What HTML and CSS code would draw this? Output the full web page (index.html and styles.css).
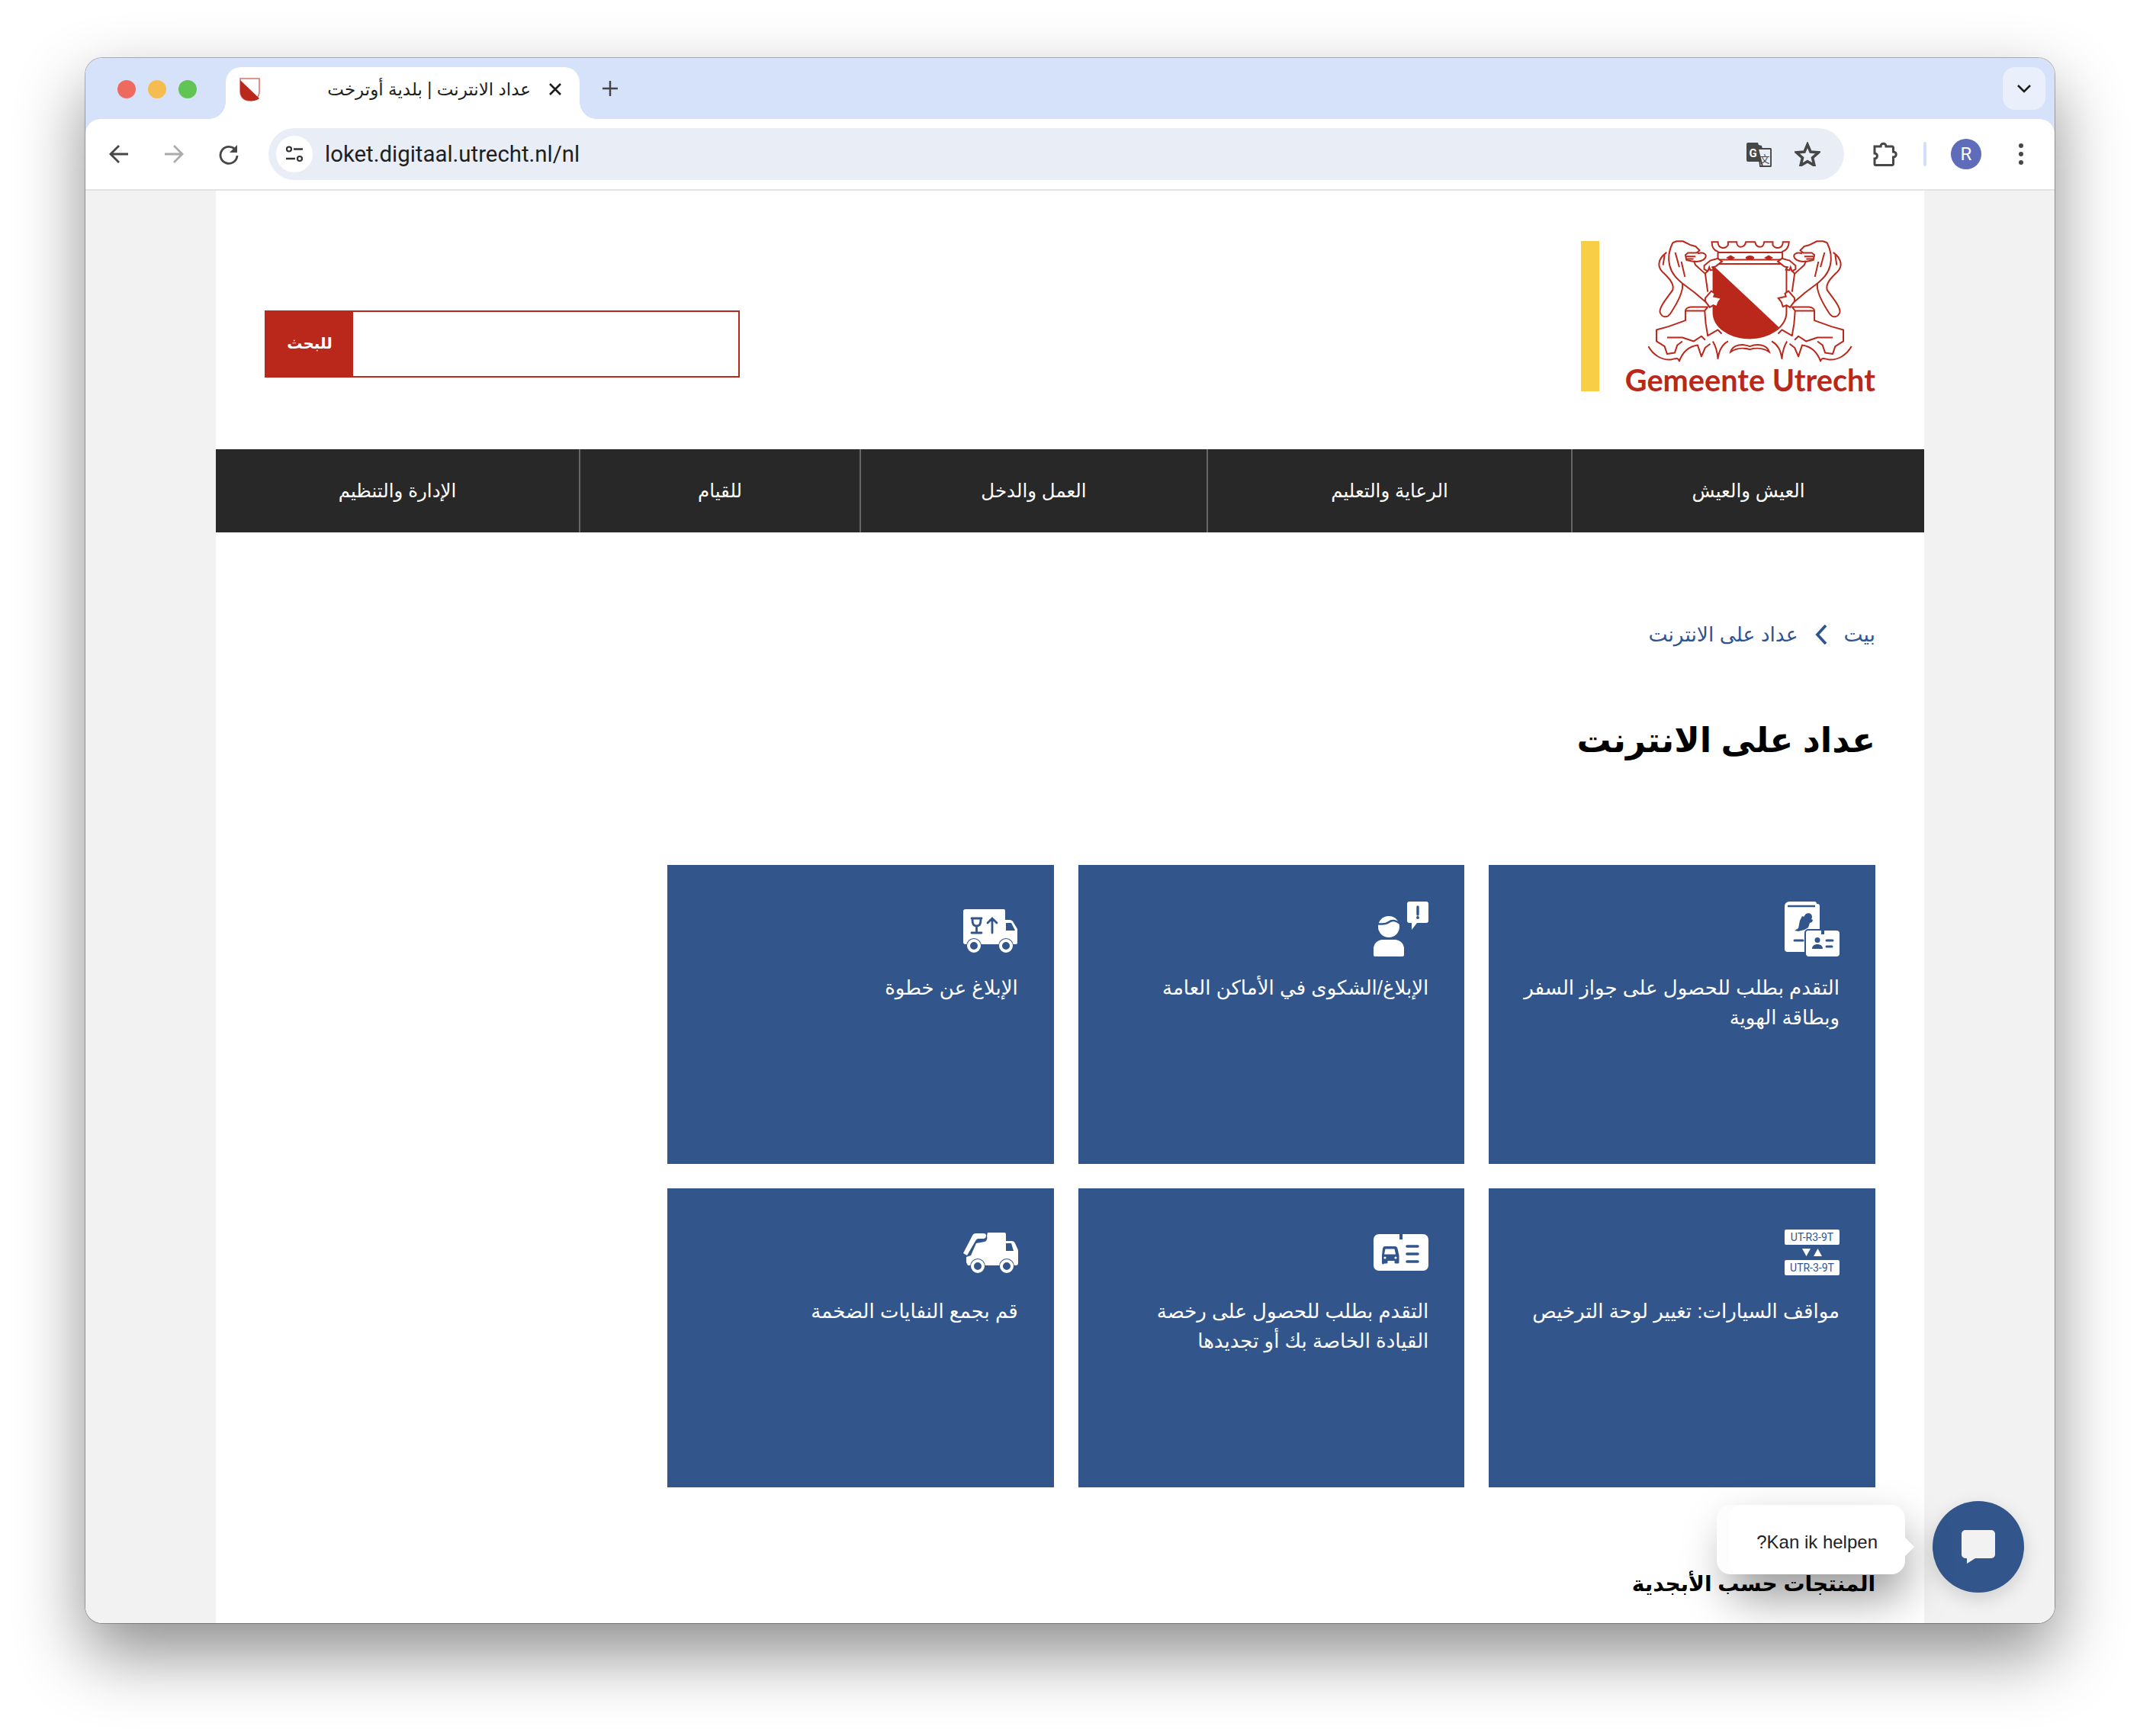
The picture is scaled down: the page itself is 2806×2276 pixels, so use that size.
FILE: index.html
```html
<!DOCTYPE html>
<html lang="ar">
<head>
    <meta charset="UTF-8">
    <meta name="viewport" content="width=device-width, initial-scale=1.0">
    <title>عداد الانترنت | بلدية أوترخت</title>
    <link rel="stylesheet" href="styles.css">
</head>
<body>
    <div class="window">
        <div class="tabstrip">
            <div class="lights">
                <span class="light red"></span>
                <span class="light yellow"></span>
                <span class="light green"></span>
            </div>
            <div class="tab">
                <svg class="favicon" viewBox="0 0 27 31">
                    <path d="M1 1h25v17c0 7-5 12-12.500 12S1 25 1 18z" fill="#fff" stroke="#d9726a" stroke-width="1.500"/>
                    <path d="M1 3l25 24c-2 2-7 4-12.500 3C6 30 1 25 1 18z" fill="#b9281a"/>
                </svg>
                <span class="tab-title" dir="rtl">عداد الانترنت | بلدية أوترخت</span>
                <svg class="tab-close" viewBox="0 0 20 20"><path d="M3 3l14 14M17 3L3 17" stroke="#1f1f1f" stroke-width="2.600" fill="none"/></svg>
            </div>
            <svg class="new-tab" viewBox="0 0 24 24"><path d="M12 2v20M2 12h20" stroke="#444" stroke-width="2.500" fill="none"/></svg>
            <div class="tab-search">
                <svg viewBox="0 0 20 12" width="20" height="12"><path d="M2 2l8 8 8-8" stroke="#1f1f1f" stroke-width="2.600" fill="none"/></svg>
            </div>
        </div>

        <div class="toolbar">
            <button class="tool">
                <svg viewBox="0 0 28 28" width="28" height="28"><path d="M26 14H4M14 3L3 14l11 11" stroke="#474747" stroke-width="2.800" fill="none"/></svg>
            </button>
            <button class="tool">
                <svg viewBox="0 0 28 28" width="28" height="28"><path d="M2 14h22M14 3l11 11-11 11" stroke="#ababab" stroke-width="2.800" fill="none"/></svg>
            </button>
            <button class="tool">
                <svg viewBox="0 0 28 28" width="28" height="28"><path d="M23 9a11 11 0 1 0 2 7" stroke="#474747" stroke-width="2.800" fill="none"/><path d="M25 2v10H15z" fill="#474747"/></svg>
            </button>
            <div class="omnibox">
                <div class="site-info">
                    <svg viewBox="0 0 24 24" width="24" height="24">
                        <circle cx="5" cy="5.500" r="3" stroke="#333" stroke-width="2.200" fill="none"/>
                        <path d="M11 5.500h12M1 18h12" stroke="#333" stroke-width="2.400"/>
                        <circle cx="19" cy="18" r="3" stroke="#333" stroke-width="2.200" fill="none"/>
                    </svg>
                </div>
                <span class="url">loket.digitaal.utrecht.nl/nl</span>
                <button class="omni-icon">
                    <svg viewBox="0 0 33 33" width="33" height="33">
                        <path d="M15 9h16a1 1 0 0 1 1 1v21a1 1 0 0 1-1 1H18z" fill="#e9edf6" stroke="#474747" stroke-width="1.800"/>
                        <path d="M2 1h13l1 3 4 1 7 27-10-6H2a2 2 0 0 1-2-2V3a2 2 0 0 1 2-2z" fill="#474747"/>
                        <path d="M15 9h16a1 1 0 0 1 1 1v21a1 1 0 0 1-1 1H21l-4-15z" fill="#e9edf6" stroke="#474747" stroke-width="1.800"/>
                        <text x="8.500" y="20" class="glyph-g">G</text>
                        <text x="24" y="27" class="glyph-zh">文</text>
                    </svg>
                </button>
                <button class="omni-icon">
                    <svg viewBox="0 0 34 32" width="34" height="32"><path d="M17 3.500l4 9.500 10.500.900-8 6.900 2.500 10.200-9-5.400-9 5.400 2.500-10.200-8-6.900 10.500-.900z" fill="none" stroke="#474747" stroke-width="3.600"/></svg>
                </button>
            </div>
            <button class="tool">
                <svg viewBox="0 0 32 32" width="32" height="32"><path d="M2 6h8c0-5 7-5 7 0h8a1.500 1.500 0 0 1 1.500 1.500V13c5 0 5 7 0 7v9a1.500 1.500 0 0 1-1.500 1.500H3.500A1.500 1.500 0 0 1 2 29v-7c4.500 0 4.500-7 0-7z" fill="none" stroke="#474747" stroke-width="3"/></svg>
            </button>
            <span class="tool-sep"></span>
            <button class="tool"><span class="avatar">R</span></button>
            <button class="tool">
                <svg viewBox="0 0 8 30" width="8" height="30"><circle cx="4" cy="4" r="3" fill="#474747"/><circle cx="4" cy="15" r="3" fill="#474747"/><circle cx="4" cy="26" r="3" fill="#474747"/></svg>
            </button>
        </div>

        <div class="viewport">
            <div class="page" dir="rtl">
                <header class="site-header">
                    <div class="logo" dir="ltr">
                        <span class="logo-bar"></span>
                        <div class="logo-mark">
                            <svg class="crest" viewBox="365 70 805 485">
                                <defs>
                                    <g id="lion" fill="none" stroke="#b9281a" stroke-width="6" stroke-linejoin="round">
                                        <path d="M462 82l16-6h24l28 14 22 6 16 16-12 10h-34l-10 8 4 20 30 6 6 14 38 34 36-44 24-14"/>
                                        <path d="M560 124c25-6 38 4 30 18-8 12-30 16-45 13M512 136h40M514 146h30"/>
                                        <path d="M462 82c-14 28-20 58-12 90 8 33 30 53 50 70l48 36 52 44"/>
                                        <path d="M500 242c5 28-20 78-48 120-12 16-32 16-40-6-4-21 28-56 50-88 8-28-22-53-42-73-15-17-22-45 18-75"/>
                                        <path d="M472 120l16 58M496 156l14 60M430 130l-6 40M590 204l10 71"/>
                                        <path d="M512 350c0-8 10-14 22-15h66l-12 15h-76v38l-67 24-47 13v45l32 20 10 30 30-5 10-30 20-15"/>
                                        <path d="M588 350l4 50 8 48 40-23 15 15M440 455h60l45 15 30-20 15 15"/>
                                        <path d="M366 490c19 35 54 55 89 52 15-2 27-12 33 6 12-33 37-58 72-63l15 45 15-35 20-15"/>
                                        <path d="M620 470c12 20 18 45 20 68 5-33 15-53 40-68"/>
                                    </g>
                                </defs>
                                <use href="#lion"/>
                                <use href="#lion" transform="matrix(-1 0 0 1 1532 0)"/>
                                <path d="M622 165h288v190c0 60-70 103-145 103-80 0-143-45-143-103z" fill="#fff" stroke="#b9281a" stroke-width="6"/>
                                <path d="M622 172l258 243c-24 26-70 43-115 43-80 0-143-45-143-103z" fill="#b9281a"/>
                                <path d="M616 79h24c0 26 28 30 40 12V79h34c0 26 30 26 36 0h36c6 26 34 26 36 0h34v12c12 18 40 14 40-12h24c0 20-12 34-26 38v32H640v-32c-14-4-24-18-24-38zM640 120h252" fill="#fff" stroke="#b9281a" stroke-width="6"/>
                                <path d="M672 141l18-10 18 10-18 10zM748 141c6-12 30-12 36 0-6 12-30 12-36 0zM822 141l18-10 18 10-18 10z" fill="#b9281a"/>
                                <path d="M586 172l24-20 30-8 16 12-26 20-12 2 6 10-14 2-4-12-6 16-14-8z" fill="#fff" stroke="#b9281a" stroke-width="6"/>
                                <path d="M946 172l-24-20-30-8-16 12 26 20 12 2-6 10 14 2 4-12 6 16 14-8z" fill="#fff" stroke="#b9281a" stroke-width="6"/>
                                <path d="M590 300l24-28 14 10-4 12 30 6-12 16-6 18-14-6-14 8-18-24z" fill="#fff" stroke="#b9281a" stroke-width="6"/>
                                <path d="M942 300l-24-28-14 10 4 12-30 6 12 16 6 18 14-6 14 8 18-24z" fill="#fff" stroke="#b9281a" stroke-width="6"/>
                                <path d="M690 512c10-32 50-32 76-22 26-10 66-10 76 22-22-15-52-17-76-10-24-7-54-5-76 10z" fill="none" stroke="#b9281a" stroke-width="6"/>
                            </svg>
                            <span class="logo-text">Gemeente Utrecht</span>
                        </div>
                    </div>
                    <form class="search">
                        <input class="search-input" type="text">
                        <button class="search-btn" type="button">للبحث</button>
                    </form>
                </header>

                <nav class="main-nav">
                    <a>العيش والعيش</a>
                    <a>الرعاية والتعليم</a>
                    <a>العمل والدخل</a>
                    <a>للقيام</a>
                    <a>الإدارة والتنظيم</a>
                </nav>

                <main class="content">
                    <div class="breadcrumb">
                        <a>بيت</a>
                        <svg viewBox="0 0 16 28" width="16" height="28"><path d="M14 2L3 14l11 12" stroke="#2f5590" stroke-width="3.800" fill="none"/></svg>
                        <a>عداد على الانترنت</a>
                    </div>

                    <h1>عداد على الانترنت</h1>

                    <div class="cards">
                        <a class="card">
                            <svg class="card-icon" viewBox="0 0 72 72">
                                <path d="M6 0h33c2 0 3 1 3 3h1a3 3 0 0 1 3 3v60H4a4 4 0 0 1-4-4V6a6 6 0 0 1 6-6z" fill="#fff"/>
                                <path d="M4 6h36" stroke="#32568c" stroke-width="2.400"/>
                                <path d="M28 16c4-2 8 0 8 4 0 2-1 3-1 3l2 1-1 3-3 1-2 6-5 3-8 2-5-1 5-3 2-10 3-6 2 1z" fill="#32568c"/>
                                <path d="M13 51h11" stroke="#32568c" stroke-width="3" stroke-linecap="round"/>
                                <rect x="26" y="36" width="46" height="36" rx="5" fill="#32568c"/>
                                <path d="M31 38h17v5h4v-5h16a4 4 0 0 1 4 4v26a4 4 0 0 1-4 4H32a4 4 0 0 1-4-4V41a3 3 0 0 1 3-3z" fill="#fff"/>
                                <circle cx="43" cy="50.500" r="3.500" fill="#32568c"/>
                                <path d="M36 62c0-4 3-6 7-6s7 2 7 6z" fill="#32568c"/>
                                <path d="M55 51h8M55 59h7" stroke="#32568c" stroke-width="3" stroke-linecap="round"/>
                            </svg>
                            <span>التقدم بطلب للحصول على جواز السفر وبطاقة الهوية</span>
                        </a>
                        <a class="card">
                            <svg class="card-icon" viewBox="0 0 72 72">
                                <path d="M47 0h22a3 3 0 0 1 3 3v22a3 3 0 0 1-3 3H57l-7 9v-9h-3a3 3 0 0 1-3-3V3a3 3 0 0 1 3-3z" fill="#fff"/>
                                <path d="M58 7v10" stroke="#32568c" stroke-width="3.400" stroke-linecap="round"/>
                                <circle cx="58" cy="21" r="2" fill="#32568c"/>
                                <circle cx="20" cy="33" r="14" fill="#fff"/>
                                <path d="M5 29c6 1 11 1 15-2 4-3 8-3 15 2" fill="none" stroke="#32568c" stroke-width="2.600"/>
                                <path d="M12 50h16a12 12 0 0 1 12 12v8a2 2 0 0 1-2 2H2a2 2 0 0 1-2-2v-8a12 12 0 0 1 12-12z" fill="#fff"/>
                            </svg>
                            <span>الإبلاغ/الشكوى في الأماكن العامة</span>
                        </a>
                        <a class="card">
                            <svg class="card-icon" viewBox="0 0 72 72">
                                <path d="M3 10h50a2 2 0 0 1 2 2v12h6c2 0 3 1 4 2l6 10v18a2 2 0 0 1-2 2H3a3 3 0 0 1-3-3V13a3 3 0 0 1 3-3z" fill="#fff"/>
                                <path d="M56 28h7l5 10H56z" fill="#32568c"/>
                                <circle cx="14" cy="58" r="10" fill="#32568c"/>
                                <circle cx="14" cy="58" r="7" fill="none" stroke="#fff" stroke-width="4"/>
                                <circle cx="56" cy="58" r="10" fill="#32568c"/>
                                <circle cx="56" cy="58" r="7" fill="none" stroke="#fff" stroke-width="4"/>
                                <path d="M11 22h13M12 22c0 7 1 10 5.500 10S23 29 23 22M17.500 32v8M11 41h13M38 41V22M32 28l6-6 6 6" fill="none" stroke="#32568c" stroke-width="2.800" stroke-linecap="round"/>
                            </svg>
                            <span>الإبلاغ عن خطوة</span>
                        </a>
                        <a class="card">
                            <svg class="card-icon" viewBox="0 0 72 72">
                                <rect x="0" y="6" width="72" height="20" rx="2" fill="#fff"/>
                                <text x="36" y="21" class="plate-text">UT-R3-9T</text>
                                <path d="M23 31h11l-5.500 10zM38 41h11l-5.500-10z" fill="#fff"/>
                                <rect x="0" y="46" width="72" height="20" rx="2" fill="#fff"/>
                                <text x="36" y="61" class="plate-text">UTR-3-9T</text>
                            </svg>
                            <span>مواقف السيارات: تغيير لوحة الترخيص</span>
                        </a>
                        <a class="card">
                            <svg class="card-icon" viewBox="0 0 72 72">
                                <path d="M7 12h27v7h4v-7h27a7 7 0 0 1 7 7v34a7 7 0 0 1-7 7H7a7 7 0 0 1-7-7V19a7 7 0 0 1 7-7z" fill="#fff"/>
                                <path d="M15 28h13c2 0 3 1 3.500 3l2 9v9a1.500 1.500 0 0 1-1.500 1.500h-3a1.500 1.500 0 0 1-1.500-1.500v-2h-9v2a1.500 1.500 0 0 1-1.500 1.500h-3A1.500 1.500 0 0 1 11 49v-9l1-9c.5-2 1.500-3 3-3z" fill="#32568c"/>
                                <path d="M15.500 31.500h12l1.500 7H14z" fill="#fff"/>
                                <circle cx="15" cy="43" r="1.600" fill="#fff"/>
                                <circle cx="29" cy="43" r="1.600" fill="#fff"/>
                                <path d="M44 28h14M44 38h14M44 48h14" stroke="#32568c" stroke-width="3.600" stroke-linecap="round"/>
                            </svg>
                            <span>التقدم بطلب للحصول على رخصة القيادة الخاصة بك أو تجديدها</span>
                        </a>
                        <a class="card">
                            <svg class="card-icon" viewBox="0 0 72 72">
                                <path d="M32 10h22a2 2 0 0 1 2 2v9h7c3 0 4 1 5 3l4 9v17a3 3 0 0 1-3 3H6l-2-4v-7l6-2 7-16 11-2c3-1 4-4 3-8z" fill="#fff"/>
                                <path d="M56 24h7l3 10H56z" fill="#32568c"/>
                                <path d="M0 37l12-23c1-2 2-3 5-3h9c3 0 4 1 4 3s-1 4-4 4h-6c-2 0-3 1-4 3L5 40z" fill="#fff"/>
                                <circle cx="19" cy="54" r="10" fill="#32568c"/>
                                <circle cx="19" cy="54" r="7" fill="none" stroke="#fff" stroke-width="4"/>
                                <circle cx="57" cy="54" r="10" fill="#32568c"/>
                                <circle cx="57" cy="54" r="7" fill="none" stroke="#fff" stroke-width="4"/>
                            </svg>
                            <span>قم بجمع النفايات الضخمة</span>
                        </a>
                    </div>

                    <h2>المنتجات حسب الأبجدية</h2>
                </main>
            </div>
        </div>

        <div class="chat">
            <div class="chat-bubble" dir="rtl">Kan ik helpen?</div>
            <button class="chat-btn">
                <svg viewBox="0 0 44 44" width="44" height="44"><path d="M5 0h34a5 5 0 0 1 5 5v27a5 5 0 0 1-5 5H18l-11 7v-7H5a5 5 0 0 1-5-5V5a5 5 0 0 1 5-5z" fill="#f2f2f2"/></svg>
            </button>
        </div>
    </div>
</body>
</html>
```

FILE: styles.css
```css
* {
    box-sizing: border-box;
}
html, body {
    margin: 0;
    padding: 0;
    background: #fff;
    height: 2276px;
    overflow: hidden;
}
body {
    font-family: "Liberation Sans", "DejaVu Sans", sans-serif;
    padding: 76px 112px 0;
}
button {
    border: none;
    background: none;
    padding: 0;
    font: inherit;
}

/* browser frame */
.window {
    position: relative;
    height: 2052px;
    display: flex;
    flex-direction: column;
    border-radius: 22px;
    overflow: hidden;
    background: #d6e2fa;
}
body::before {
    content: "";
    position: absolute;
    left: 112px;
    top: 76px;
    width: 2582px;
    height: 2052px;
    border-radius: 22px;
    box-shadow: 0 0 0 1px rgba(0, 0, 0, 0.28), 0 40px 90px rgba(0, 0, 0, 0.45);
}
.tabstrip {
    height: 80px;
    flex: none;
    display: flex;
    align-items: flex-start;
}
.lights {
    display: flex;
    gap: 16px;
    padding: 29px 38px 0 42px;
}
.light {
    width: 24px;
    height: 24px;
    border-radius: 50%;
}
.red { background: #ee6a5f; }
.yellow { background: #f5bd4f; }
.green { background: #61c454; }
.tab {
    position: relative;
    width: 464px;
    height: 68px;
    margin-top: 12px;
    padding: 0 20px 10px 18px;
    display: flex;
    align-items: center;
    background: #fff;
    border-radius: 20px 20px 0 0;
}
.tab::before, .tab::after {
    content: "";
    position: absolute;
    bottom: 0;
    width: 22px;
    height: 22px;
}
.tab::before {
    left: -22px;
    background: radial-gradient(circle at 0 0, transparent 21.500px, #fff 22px);
}
.tab::after {
    right: -22px;
    background: radial-gradient(circle at 100% 0, transparent 21.500px, #fff 22px);
}
.favicon {
    width: 27px;
    height: 31px;
    flex: none;
}
.tab-title {
    flex: 1;
    margin-right: 22px;
    font-size: 23px;
    color: #1f1f1f;
    white-space: nowrap;
}
.tab-close {
    width: 20px;
    height: 20px;
    margin-right: 2px;
}
.new-tab {
    width: 24px;
    height: 24px;
    margin: 28px 0 0 28px;
}
.tab-search {
    width: 56px;
    height: 56px;
    margin: 12px 12px 0 auto;
    display: flex;
    align-items: center;
    justify-content: center;
    background: #e9f0fc;
    border-radius: 16px;
}

.toolbar {
    height: 94px;
    flex: none;
    display: flex;
    align-items: flex-start;
    padding: 12px 8px 0;
    background: #fff;
    border-radius: 20px 20px 0 0;
    border-bottom: 2px solid #e1e3e6;
}
.tool {
    width: 72px;
    height: 68px;
    flex: none;
    display: flex;
    align-items: center;
    justify-content: center;
}
.omnibox {
    flex: 1;
    height: 68px;
    margin: 0 18px 0 16px;
    padding: 0 16px 0 10px;
    display: flex;
    align-items: center;
    background: #e9edf6;
    border-radius: 34px;
}
.site-info {
    width: 48px;
    height: 48px;
    display: flex;
    align-items: center;
    justify-content: center;
    background: #fff;
    border-radius: 50%;
}
.url {
    flex: 1;
    margin-left: 16px;
    font-family: Roboto, sans-serif;
    font-size: 29.400px;
    color: #1f1f1f;
}
.omni-icon {
    width: 64px;
    height: 48px;
    display: flex;
    align-items: center;
    justify-content: center;
}
.glyph-g {
    font-family: Roboto, sans-serif;
    font-weight: 700;
    font-size: 15px;
    text-anchor: middle;
    fill: #fff;
}
.glyph-zh {
    font-family: "Noto Sans CJK SC", sans-serif;
    font-size: 13px;
    text-anchor: middle;
    fill: #474747;
}
.tool-sep {
    width: 4px;
    height: 32px;
    margin: 18px 16px 0 14px;
    flex: none;
    background: #d3e0fb;
    border-radius: 2px;
}
.avatar {
    width: 40px;
    height: 40px;
    display: flex;
    align-items: center;
    justify-content: center;
    background: #5f6cba;
    border-radius: 50%;
    font-family: Roboto, sans-serif;
    font-size: 24px;
    color: #fff;
}

/* site */
.viewport {
    flex: 1;
    min-height: 0;
    background: #f2f2f2;
    overflow: hidden;
}
.page {
    width: 2240px;
    height: 100%;
    margin: 0 auto;
    background: #fff;
}
.site-header {
    height: 339px;
    padding: 64px 64px 0;
    display: flex;
    justify-content: space-between;
    align-items: flex-start;
}
.logo {
    display: flex;
    gap: 34px;
}
.logo-bar {
    width: 24px;
    height: 197px;
    margin-top: 2px;
    background: #f7ce46;
}
.logo-mark {
    display: flex;
    flex-direction: column;
    align-items: center;
}
.crest {
    width: 268px;
    height: 162px;
    display: block;
}
.logo-text {
    margin-top: -2px;
    font-family: Lato, sans-serif;
    font-weight: 700;
    font-size: 39.700px;
    line-height: 48px;
    color: #b9281a;
    white-space: nowrap;
}
.search {
    width: 623px;
    height: 88px;
    margin-top: 93px;
    display: flex;
    border: 2px solid #b9281a;
}
.search-input {
    flex: 1;
    min-width: 0;
    border: none;
    outline: none;
}
.search-btn {
    width: 114px;
    padding-bottom: 2px;
    background: #b9281a;
    color: #fff;
    font-weight: 700;
    font-size: 20px;
}
.main-nav {
    height: 109px;
    display: grid;
    grid-template-columns: 463px 478px 455px 368px 476px;
    background: #282828;
}
.main-nav a {
    display: flex;
    align-items: center;
    justify-content: center;
    color: #fff;
    font-size: 24.500px;
    border-left: 2px solid #666;
}
.main-nav a:last-child {
    border-left: none;
}
.content {
    padding: 0 64px;
}
.breadcrumb {
    height: 48px;
    margin-top: 110px;
    display: flex;
    align-items: center;
    gap: 22px;
    color: #2f5590;
    font-size: 26.500px;
}
h1 {
    margin: 79px 0 0;
    font-size: 45px;
    line-height: 72px;
    color: #000;
}
.cards {
    margin-top: 127px;
    display: grid;
    grid-template-columns: repeat(3, 506.670px);
    grid-auto-rows: 392px;
    gap: 32px;
}
.card {
    padding: 48px 47px 48px 40px;
    background: #32568c;
    color: #fff;
    font-size: 26px;
    line-height: 39px;
}
.card-icon {
    width: 72px;
    height: 72px;
    display: block;
    margin-bottom: 22px;
}
.plate-text {
    font-family: Roboto, sans-serif;
    font-size: 14px;
    text-anchor: middle;
    fill: #32568c;
}
h2 {
    margin: 103px 0 0;
    font-size: 28px;
    line-height: 48px;
    color: #000;
}

/* chat widget */
.chat {
    position: absolute;
    right: 40px;
    bottom: 40px;
    display: flex;
    align-items: center;
}
.chat-bubble {
    position: relative;
    width: 231px;
    height: 91px;
    margin: 0 36px 19px 0;
    padding: 7px 36px 0 0;
    display: flex;
    align-items: center;
    background: #fff;
    border-radius: 18px;
    font-size: 24px;
    color: #222;
    box-shadow: -16px 0 0 #fdfdfd, 0 30px 60px rgba(0, 0, 0, 0.4);
}
.chat-bubble::after {
    content: "";
    position: absolute;
    right: -12px;
    top: 43px;
    border-left: 12px solid #fff;
    border-top: 12px solid transparent;
    border-bottom: 12px solid transparent;
}
.chat-btn {
    width: 120px;
    height: 120px;
    display: flex;
    align-items: center;
    justify-content: center;
    background: #32568c;
    border-radius: 50%;
    box-shadow: 0 8px 24px rgba(0, 0, 0, 0.15);
}
```
